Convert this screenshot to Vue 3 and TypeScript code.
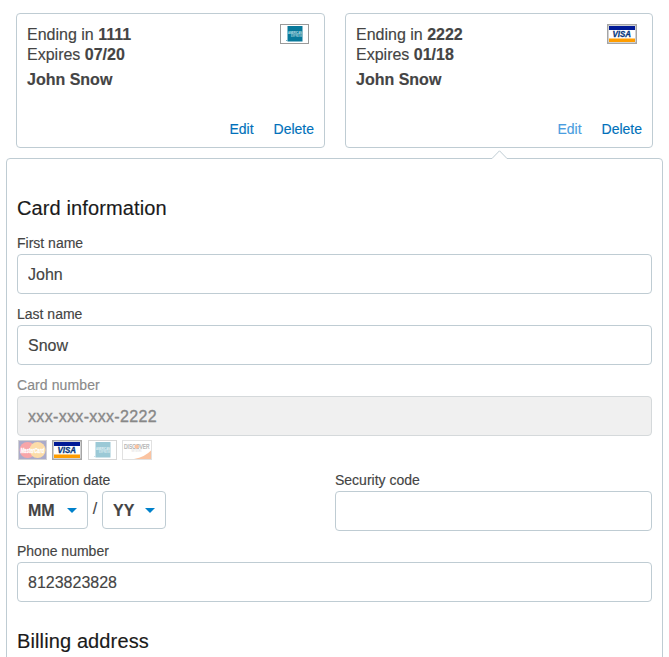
<script setup lang="ts">
import { defineComponent, h, ref } from 'vue'

type Brand = 'mastercard' | 'visa' | 'amex' | 'discover'

interface SavedCard {
  brand: Brand
  ending: string
  expires: string
  holder: string
  active: boolean
}

const cards: SavedCard[] = [
  { brand: 'amex', ending: '1111', expires: '07/20', holder: 'John Snow', active: false },
  { brand: 'visa', ending: '2222', expires: '01/18', holder: 'John Snow', active: true },
]

const brands: Brand[] = ['mastercard', 'visa', 'amex', 'discover']

const firstName = ref('John')
const lastName = ref('Snow')
const cardNumber = ref('xxx-xxx-xxx-2222')
const securityCode = ref('')
const phone = ref('8123823828')

const font = 'Liberation Sans, Arial, sans-serif'

const label = (
  x: number,
  y: number,
  size: number,
  width: number,
  fill: string,
  text: string,
  extra: Record<string, string> = {},
) => h('text', { x, y, 'font-size': size, textLength: width, lengthAdjust: 'spacingAndGlyphs', fill, 'font-family': font, ...extra }, text)

const BrandLogo = defineComponent({
  props: { brand: { type: String, required: true } },
  setup(props) {
    const frame = (width: number, stroke: string, fill: string) =>
      h('rect', { x: 0.5, y: 0.5, width: width - 1, height: 19, fill, stroke })
    return () => {
      const parts = []
      const width = props.brand === 'amex' || props.brand === 'mastercard' ? 29 : 30
      if (props.brand === 'visa') {
        parts.push(
          h('rect', { width: 30, height: 20, fill: '#a5a5a5' }),
          h('rect', { x: 1.5, y: 1.5, width: 27, height: 17, fill: '#fff' }),
          h('rect', { x: 2, y: 2, width: 26, height: 4, fill: '#001a96' }),
          h('rect', { x: 2, y: 14.5, width: 26, height: 3.5, fill: '#ff9d00' }),
          label(5.5, 13.2, 9, 18.5, '#06377c', 'VISA', {
            'font-weight': 'bold',
            'font-style': 'italic',
            stroke: '#06377c',
            'stroke-width': '0.3',
          }),
        )
      } else if (props.brand === 'amex') {
        parts.push(
          frame(width, '#9a9a9a', '#fff'),
          h('rect', { x: 7.5, y: 2, width: 15, height: 15.5, fill: '#08799b' }),
          h('rect', { x: 6, y: 16, width: 2, height: 1, fill: '#78b4c6' }),
          label(8, 10, 4, 14, '#c3e0e6', 'AMERICAN', { 'font-weight': 'bold' }),
          label(11, 13, 3.4, 11, '#a5d0da', 'EXPRESS', { 'font-weight': 'bold' }),
        )
      } else if (props.brand === 'mastercard') {
        parts.push(
          frame(width, '#8f8f98', '#30307d'),
          h('circle', { cx: 9.6, cy: 10, r: 8, fill: '#f02028' }),
          h('circle', { cx: 19.6, cy: 10, r: 8, fill: '#f9a928' }),
          label(2.5, 12.5, 7, 23.5, '#fff', 'MasterCard', {
            'font-weight': 'bold',
            'font-style': 'italic',
            stroke: '#fff',
            'stroke-width': '0.3',
          }),
        )
      } else {
        parts.push(
          frame(width, '#b5b5b5', '#fff'),
          h('path', { d: 'M12 19 Q23 17 29 10.5 V19 Z', fill: '#f36b16' }),
          label(2, 9, 7, 25.5, '#222', 'DISCOVER', { stroke: '#222', 'stroke-width': '0.2' }),
          h('circle', { cx: 14.6, cy: 6.6, r: 2.2, fill: '#f36b16' }),
          label(9.5, 12.2, 2.8, 10, '#999', 'NETWORK'),
        )
      }
      return h('svg', { width, height: 20, viewBox: `0 0 ${width} 20`, role: 'img', overflow: 'visible' }, parts)
    }
  },
})
</script>

<template>
  <main class="page">
    <section class="cards">
      <article v-for="card in cards" :key="card.ending" class="card">
        <div class="card-top">
          <div class="summary">
            <div>Ending in <b>{{ card.ending }}</b></div>
            <div>Expires <b>{{ card.expires }}</b></div>
            <div class="holder">{{ card.holder }}</div>
          </div>
          <BrandLogo class="card-logo" :brand="card.brand" />
        </div>
        <div class="actions">
          <a :class="{ current: card.active }">Edit</a>
          <a>Delete</a>
        </div>
      </article>
    </section>

    <section class="panel">
      <svg class="pointer" width="16" height="9" viewBox="0 0 16 9">
        <path d="M0 8.5 L7.5 .8 L15 8.5 V9 H0Z" fill="#fff" />
        <path d="M0 8.5 L7.5 .8 L15 8.5" fill="none" stroke="#bfccd3" />
      </svg>
      <h2>Card information</h2>
      <label class="field">
        <span>First name</span>
        <input v-model="firstName" type="text" />
      </label>
      <label class="field">
        <span>Last name</span>
        <input v-model="lastName" type="text" />
      </label>
      <label class="field locked">
        <span>Card number</span>
        <input v-model="cardNumber" type="text" disabled />
      </label>
      <div class="brands">
        <BrandLogo
          v-for="brand in brands"
          :key="brand"
          :brand="brand"
          :class="['brand', brand, { faded: brand !== 'visa' }]"
        />
      </div>
      <div class="split">
        <div class="field">
          <span>Expiration date</span>
          <div class="expiry">
            <button type="button" class="month">MM<i class="caret"></i></button>
            <span class="slash">/</span>
            <button type="button" class="year">YY<i class="caret"></i></button>
          </div>
        </div>
        <label class="field">
          <span>Security code</span>
          <input v-model="securityCode" type="text" />
        </label>
      </div>
      <label class="field">
        <span>Phone number</span>
        <input v-model="phone" type="text" />
      </label>
      <h2 class="billing">Billing address</h2>
    </section>
  </main>
</template>

<style>
body {
  background: #fff;
}
</style>

<style scoped>
.page,
.page * {
  box-sizing: border-box;
}
.page {
  display: flex;
  flex-direction: column;
  height: 657px;
  overflow: hidden;
  padding: 13px 6px 0;
  color: #444;
  font: 16px/20px "Liberation Sans", Arial, sans-serif;
  -webkit-text-stroke: 0.15px;
}
.page svg {
  -webkit-text-stroke: 0;
}
.cards {
  display: grid;
  grid-template-columns: 309px 308px;
  gap: 20px;
  padding-left: 10px;
}
.card {
  display: flex;
  flex-direction: column;
  justify-content: space-between;
  height: 135px;
  padding: 10px 10px 8px;
  border: 1px solid #bfccd3;
  border-radius: 4px;
}
.card-top {
  display: flex;
  justify-content: space-between;
}
.summary {
  padding-top: 1px;
}
.card-logo {
  margin-right: 5px;
}
.holder {
  margin-top: 5px;
  font-weight: bold;
}
.actions {
  display: flex;
  justify-content: flex-end;
  gap: 20px;
  font-size: 14px;
}
.actions a {
  color: #0070ba;
}
.actions a.current {
  color: #4a9de0;
}
.panel {
  position: relative;
  flex: none;
  width: 657px;
  height: 520px;
  margin-top: 10px;
  padding: 37px 10px 0;
  border: 1px solid #bfccd3;
  border-radius: 4px;
}
.pointer {
  position: absolute;
  top: -9px;
  left: 485px;
}
h2 {
  margin: 0 0 14px;
  color: #1a1a1a;
  font-size: 20px;
  font-weight: normal;
  line-height: 24px;
  letter-spacing: 0.12px;
}
.field {
  display: block;
  height: 71px;
}
.field > span {
  display: block;
  height: 20px;
  font-size: 14px;
  line-height: 18px;
}
.field input {
  display: block;
  width: 100%;
  height: 40px;
  padding: 2px 10px 0;
  border: 1px solid #bfccd3;
  border-radius: 4px;
  outline: 0;
  background: #fff;
  color: #444;
  font: inherit;
}
.field.locked {
  height: 64px;
}
.locked > span {
  color: #8a8a8a;
  letter-spacing: 0.1px;
}
.field.locked input {
  border-color: #d5d9db;
  background: #f0f0f0;
  color: #888;
  letter-spacing: 0.33px;
  -webkit-text-stroke: 0.35px #888;
}
.brands {
  display: flex;
  height: 31px;
  padding-left: 1px;
}
.brand {
  margin-right: 5px;
}
.brand.visa {
  margin-right: 6px;
}
.faded {
  opacity: 0.4;
}
.split {
  display: grid;
  grid-template-columns: 318px 317px;
}
.expiry {
  display: flex;
}
.expiry button {
  display: flex;
  align-items: center;
  justify-content: space-between;
  height: 38px;
  padding: 2px 10px 0;
  border: 1px solid #bfccd3;
  border-radius: 4px;
  background: #fff;
  color: #444;
  font: bold 16px/20px "Liberation Sans", Arial, sans-serif;
}
.expiry .month {
  width: 71px;
}
.expiry .year {
  width: 64px;
}
.slash {
  width: 14px;
  padding-top: 8px;
  text-align: center;
}
.caret {
  margin-top: -1px;
  border: 5px solid transparent;
  border-top-color: #0081cb;
  border-bottom: 0;
}
.billing {
  margin: 16px 0 0;
}
</style>
